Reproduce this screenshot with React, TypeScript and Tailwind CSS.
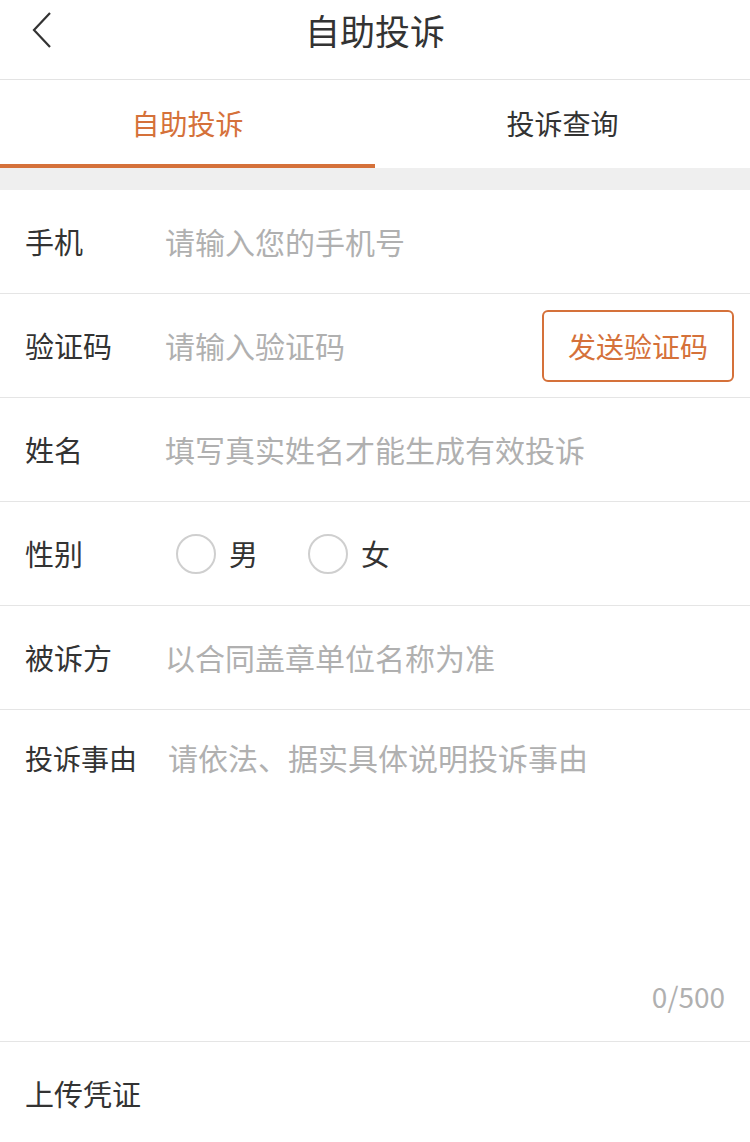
import { useState } from "react";

const font = { fontFamily: '"Noto Sans CJK SC", "Noto Sans", sans-serif' };

function Row({ label, children }: { label: string; children: React.ReactNode }) {
  return (
    <div className="flex h-[104px] items-center border-b border-[#e5e5e5] pl-[25px] pr-[16px]">
      <div className="w-[140px] shrink-0 text-[29px] text-[#333]">{label}</div>
      <div className="flex flex-1 items-center">{children}</div>
    </div>
  );
}

function Radio({ label }: { label: string }) {
  return (
    <div className="flex items-center">
      <span className="h-[40px] w-[40px] rounded-full border-2 border-[#cfcfcf]" />
      <span className="ml-[13px] text-[29px] text-[#333]">{label}</span>
    </div>
  );
}

export default function App() {
  const [tab, setTab] = useState(0);
  return (
    <div className="min-h-[1142px] w-[750px] bg-white" style={font}>
      <header className="relative flex h-[80px] justify-center border-b border-[#e3e3e3] pt-[5px]">
        <svg className="absolute left-[30px] top-[11px]" width="26" height="38" viewBox="0 0 26 38" fill="none">
          <path d="M20 2 L4 19 L20 36" stroke="#333" strokeWidth="2.2" />
        </svg>
        <h1 className="text-[35px] leading-[50px] text-[#333]">自助投诉</h1>
      </header>

      <nav className="flex h-[88px]">
        {["自助投诉", "投诉查询"].map((t, i) => (
          <button
            key={t}
            onClick={() => setTab(i)}
            className={
              "flex flex-1 items-center justify-center border-b-[4px] pt-[2px] text-[28px] " +
              (tab === i ? "border-[#d5713a] text-[#d5713a]" : "border-transparent text-[#333]")
            }
          >
            {t}
          </button>
        ))}
      </nav>

      <div className="h-[22px] bg-[#efefef]" />

      <Row label="手机">
        <span className="text-[30px] text-[#b0b0b0]">请输入您的手机号</span>
      </Row>
      <Row label="验证码">
        <span className="flex-1 text-[30px] text-[#b0b0b0]">请输入验证码</span>
        <button className="flex h-[72px] w-[192px] items-center justify-center rounded-[6px] border-2 border-[#d5713a] text-[28px] text-[#d5713a]">
          发送验证码
        </button>
      </Row>
      <Row label="姓名">
        <span className="text-[30px] text-[#b0b0b0]">填写真实姓名才能生成有效投诉</span>
      </Row>
      <Row label="性别">
        <div className="ml-[11px] flex gap-[50px]">
          <Radio label="男" />
          <Radio label="女" />
        </div>
      </Row>
      <Row label="被诉方">
        <span className="text-[30px] text-[#b0b0b0]">以合同盖章单位名称为准</span>
      </Row>

      <div className="flex h-[332px] flex-col border-b border-[#e5e5e5] pl-[25px] pr-[25px] pt-[25px]">
        <div className="flex items-center">
          <div className="w-[143px] shrink-0 text-[28px] text-[#333]">投诉事由</div>
          <span className="text-[30px] text-[#b0b0b0]">请依法、据实具体说明投诉事由</span>
        </div>
        <div className="mt-auto mb-[24px] self-end text-[28px] text-[#b0b0b0]">0/500</div>
      </div>

      <div className="flex h-[104px] items-center pl-[25px]">
        <span className="text-[29px] text-[#333]">上传凭证</span>
      </div>
    </div>
  );
}
